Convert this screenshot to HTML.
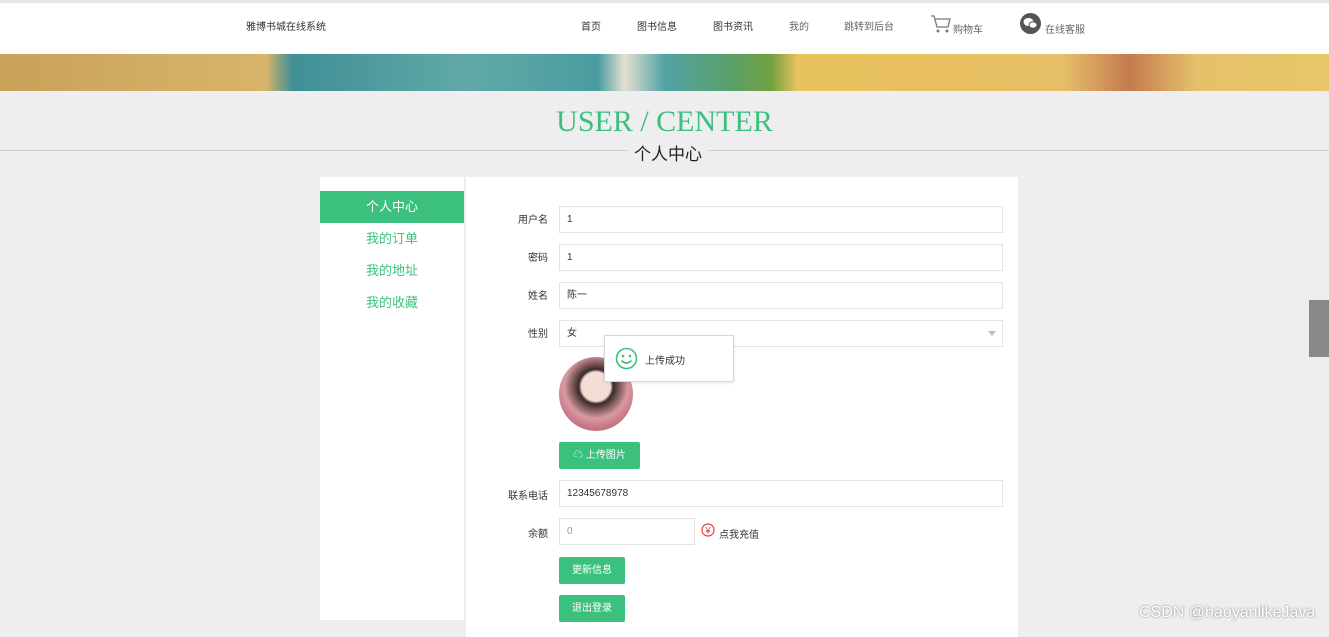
<!DOCTYPE html>
<html><head><meta charset="utf-8"><style>
*{margin:0;padding:0;box-sizing:border-box}
body{width:1329px;height:633px;overflow:hidden;background:#eeeef0;font-family:"Liberation Sans","Noto Sans CJK SC",sans-serif;position:relative;font-size:10px;color:#333}
.hdr{position:absolute;left:0;top:0;width:1329px;height:54px;background:#fff;border-top:3px solid #e6e6e6}
.hdr span{position:absolute;top:15px;font-size:10px;color:#333}
.banner{position:absolute;left:0;top:54px;width:1329px;height:37px;background:linear-gradient(90deg,#c9a25a 0%,#d8b46a 20%,#3f8f95 22%,#61a9a8 35%,#4a9ca0 45%,#e6e0d0 47%,#52a3a6 50%,#5a9f6a 55%,#70a040 58%,#e8c25f 60%,#e8c060 70%,#e6bf68 80%,#c47a50 85%,#e5c16a 90%,#e7c769 100%)}
.title{position:absolute;top:105px;width:1329px;text-align:center;font-family:"Liberation Serif",serif;font-size:30px;color:#3cc07e}
.line{position:absolute;top:150px;left:0;width:1329px;height:1px;background:#d0d0d0}
.sub{position:absolute;top:140px;left:628px;padding:0 6px;background:#eeeef0;font-size:17px;color:#222}
.side{position:absolute;left:320px;top:177px;width:144px;height:443px;background:#fff}
.side div{height:32px;line-height:32px;text-align:center;font-size:13px;color:#3cc07e}
.side .on{background:#3cc07e;color:#fff;margin-top:14px}
.main{position:absolute;left:466px;top:177px;width:552px;height:460px;background:#fff}
.lbl{position:absolute;width:82px;text-align:right;font-size:10px;color:#333}
.inp{position:absolute;left:559px;width:444px;height:27px;border:1px solid #e3e3e3;background:#fff;font-size:10px;line-height:25px;padding-left:7px;color:#333}
.btn{position:absolute;left:559px;background:#3cc07e;color:#fff;font-size:10px;text-align:center;border-radius:2px}
</style></head><body>
<div class="hdr">
<span style="left:246px">雅博书城在线系统</span>
<span style="left:581px">首页</span>
<span style="left:637px">图书信息</span>
<span style="left:713px">图书资讯</span>
<span style="left:789px;color:#666">我的</span>
<span style="left:844px;color:#666">跳转到后台</span>
<svg style="position:absolute;left:930px;top:11px" width="22" height="20" viewBox="0 0 22 20"><path d="M1 2h3l3 11h11l2-8H5" fill="none" stroke="#777" stroke-width="1.3"/><circle cx="8" cy="17" r="1.5" fill="#777"/><circle cx="17" cy="17" r="1.5" fill="#777"/></svg>
<span style="left:953px;top:18px;color:#666">购物车</span>
<svg style="position:absolute;left:1020px;top:10px" width="21" height="21"><circle cx="10.5" cy="10.5" r="10.5" fill="#555"/><ellipse cx="8.5" cy="9" rx="5" ry="4" fill="#fff"/><ellipse cx="13" cy="12" rx="4" ry="3.2" fill="#fff" stroke="#555"/></svg>
<span style="left:1045px;top:18px;color:#666">在线客服</span>
</div>
<div class="banner"></div>
<div class="title">USER / CENTER</div>
<div class="line"></div>
<div class="sub">个人中心</div>
<div class="side"><div class="on">个人中心</div><div>我的订单</div><div>我的地址</div><div>我的收藏</div></div>
<div class="main"></div>
<div class="lbl" style="left:466px;top:211px">用户名</div><div class="inp" style="top:206px">1</div>
<div class="lbl" style="left:466px;top:249px">密码</div><div class="inp" style="top:244px">1</div>
<div class="lbl" style="left:466px;top:287px">姓名</div><div class="inp" style="top:282px">陈一</div>
<div class="lbl" style="left:466px;top:325px">性别</div><div class="inp" style="top:320px">女<span style="position:absolute;right:6px;top:10px;border:4px solid transparent;border-top:5px solid #bbb"></span></div>
<div style="position:absolute;left:559px;top:357px;width:74px;height:74px;border-radius:50%;background:radial-gradient(circle at 50% 40%,#f4ddd5 0 25%,#3a2a28 30%,#d99aa0 55%,#c07080 75%,#f3e8e8 100%)"></div>
<div style="position:absolute;left:604px;top:335px;width:130px;height:47px;background:#fff;border:1px solid #d8d8d8;box-shadow:0 1px 3px rgba(0,0,0,.1)">
<svg style="position:absolute;left:10px;top:11px" width="23" height="23"><circle cx="11.5" cy="11.5" r="10" fill="none" stroke="#3cc07e" stroke-width="1.6"/><circle cx="8" cy="9" r="1.3" fill="#3cc07e"/><circle cx="15" cy="9" r="1.3" fill="#3cc07e"/><path d="M6.5 13.5q5 5 10 0" fill="none" stroke="#3cc07e" stroke-width="1.6"/></svg>
<span style="position:absolute;left:40px;top:16px;font-size:10px;color:#333">上传成功</span></div>
<div class="btn" style="top:442px;width:81px;height:27px;line-height:27px">☁ 上传图片</div>
<div class="lbl" style="left:466px;top:487px">联系电话</div><div class="inp" style="top:480px">12345678978</div>
<div class="lbl" style="left:466px;top:525px">余额</div><div class="inp" style="top:518px;width:136px;color:#999">0</div>
<svg style="position:absolute;left:701px;top:523px" width="14" height="14"><circle cx="7" cy="7" r="6" fill="none" stroke="#e33" stroke-width="1.2"/><text x="7" y="10.5" font-size="9" text-anchor="middle" fill="#e33">¥</text></svg>
<span style="position:absolute;left:719px;top:526px;font-size:10px">点我充值</span>
<div class="btn" style="top:557px;width:66px;height:27px;line-height:27px">更新信息</div>
<div class="btn" style="top:595px;width:66px;height:27px;line-height:27px">退出登录</div>
<div style="position:absolute;left:1309px;top:300px;width:20px;height:57px;background:#888"></div>
<div style="position:absolute;left:1139px;top:604px;font-size:16px;color:#fff;text-shadow:0 0 2px #777">CSDN @haoyanlikeJava</div>
</body></html>
